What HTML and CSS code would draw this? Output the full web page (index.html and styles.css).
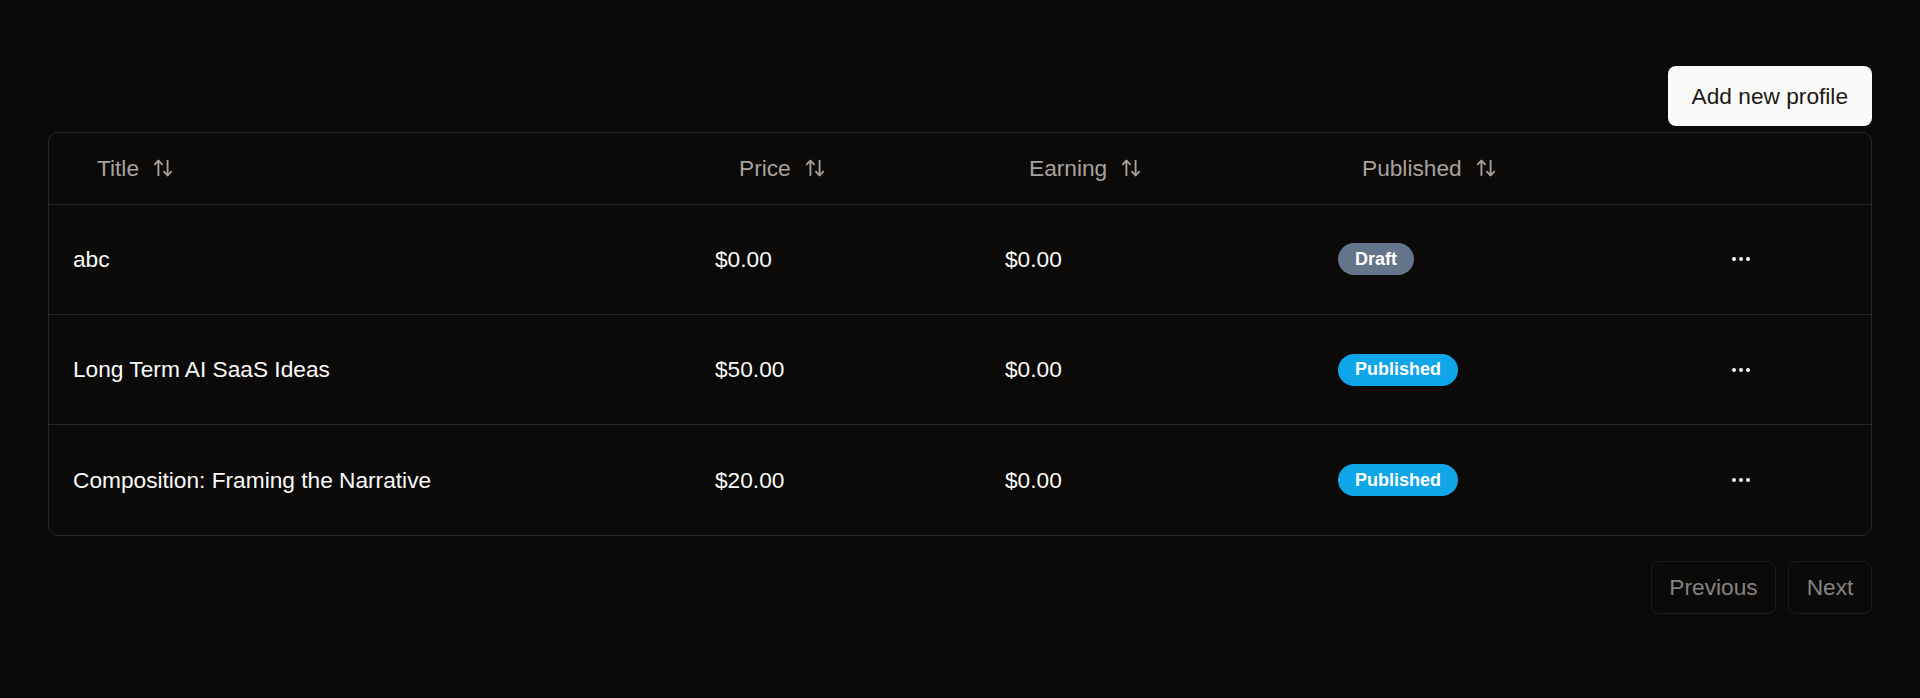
FILE: index.html
```html
<!DOCTYPE html>
<html lang="en">
<head>
<meta charset="utf-8">
<title>Profiles</title>
<link rel="stylesheet" href="styles.css">
</head>
<body>
<main class="page">
  <div class="toolbar">
    <button class="btn-primary">Add new profile</button>
  </div>
  <div class="table-wrap">
    <table class="data-table">
      <colgroup>
        <col class="c-title"><col class="c-price"><col class="c-earning"><col class="c-published"><col class="c-actions">
      </colgroup>
      <thead>
        <tr>
          <th><span class="sort">Title<svg class="sort-icon" viewBox="0 0 24 24"><path d="m21 16-4 4-4-4"/><path d="M17 20V4"/><path d="m3 8 4-4 4 4"/><path d="M7 4v16"/></svg></span></th>
          <th><span class="sort">Price<svg class="sort-icon" viewBox="0 0 24 24"><path d="m21 16-4 4-4-4"/><path d="M17 20V4"/><path d="m3 8 4-4 4 4"/><path d="M7 4v16"/></svg></span></th>
          <th><span class="sort">Earning<svg class="sort-icon" viewBox="0 0 24 24"><path d="m21 16-4 4-4-4"/><path d="M17 20V4"/><path d="m3 8 4-4 4 4"/><path d="M7 4v16"/></svg></span></th>
          <th><span class="sort">Published<svg class="sort-icon" viewBox="0 0 24 24"><path d="m21 16-4 4-4-4"/><path d="M17 20V4"/><path d="m3 8 4-4 4 4"/><path d="M7 4v16"/></svg></span></th>
          <th></th>
        </tr>
      </thead>
      <tbody>
        <tr>
          <td>abc</td>
          <td>$0.00</td>
          <td>$0.00</td>
          <td><span class="badge badge-draft">Draft</span></td>
          <td><span class="more"><svg class="more-icon" viewBox="0 0 24 24"><circle cx="12" cy="12" r="1"/><circle cx="19" cy="12" r="1"/><circle cx="5" cy="12" r="1"/></svg></span></td>
        </tr>
        <tr>
          <td>Long Term AI SaaS Ideas</td>
          <td>$50.00</td>
          <td>$0.00</td>
          <td><span class="badge badge-pub">Published</span></td>
          <td><span class="more"><svg class="more-icon" viewBox="0 0 24 24"><circle cx="12" cy="12" r="1"/><circle cx="19" cy="12" r="1"/><circle cx="5" cy="12" r="1"/></svg></span></td>
        </tr>
        <tr>
          <td>Composition: Framing the Narrative</td>
          <td>$20.00</td>
          <td>$0.00</td>
          <td><span class="badge badge-pub">Published</span></td>
          <td><span class="more"><svg class="more-icon" viewBox="0 0 24 24"><circle cx="12" cy="12" r="1"/><circle cx="19" cy="12" r="1"/><circle cx="5" cy="12" r="1"/></svg></span></td>
        </tr>
      </tbody>
    </table>
  </div>
  <div class="pagination">
    <button class="btn-outline btn-prev" disabled>Previous</button>
    <button class="btn-outline btn-next" disabled>Next</button>
  </div>
</main>
</body>
</html>
```
FILE: styles.css
```css
* { box-sizing: border-box; }
html, body {
  margin: 0;
  background: #0c0a09;
  color: #fafaf9;
  font-family: "Liberation Sans", Arial, sans-serif;
  font-size: 22.7px;
}
.page {
  padding: 66px 48px 40px 48px;
}
.toolbar {
  display: flex;
  justify-content: flex-end;
  margin-bottom: 6px;
}
.btn-primary {
  height: 60px;
  padding: 0 24px;
  border: none;
  border-radius: 8px;
  background: #fafaf9;
  color: #1c1917;
  font-family: inherit;
  font-size: 22.7px;
  cursor: pointer;
}
.table-wrap {
  border: 1px solid #292524;
  border-radius: 10px;
  overflow: hidden;
}
.data-table {
  width: 100%;
  border-collapse: collapse;
  table-layout: fixed;
}
.c-title { width: 642px; }
.c-price { width: 290px; }
.c-earning { width: 333px; }
.c-published { width: 383px; }
.c-actions { width: 174px; }
.data-table th {
  height: 71px;
  padding: 0 24px;
  text-align: left;
  font-weight: 400;
  color: #a8a29e;
  border-bottom: 1px solid #292524;
}
.sort {
  display: inline-flex;
  align-items: center;
  padding-left: 24px;
}
.sort-icon {
  width: 22px;
  height: 22px;
  margin-left: 13px;
  fill: none;
  stroke: currentColor;
  stroke-width: 2;
  stroke-linecap: round;
  stroke-linejoin: round;
}
.data-table td {
  height: 110.4px;
  padding: 0 24px;
  vertical-align: middle;
  border-bottom: 1px solid #292524;
  white-space: nowrap;
}
.data-table tbody tr:last-child td {
  border-bottom: none;
}
.badge {
  display: inline-flex;
  align-items: center;
  height: 32px;
  padding: 0 17px;
  border-radius: 999px;
  font-size: 18px;
  font-weight: 700;
  color: #ffffff;
}
.badge-draft { background: #64748b; }
.badge-pub { background: #0ea5e9; }
.more {
  display: inline-flex;
  align-items: center;
  justify-content: center;
  width: 40px;
  height: 40px;
}
.more-icon {
  width: 24px;
  height: 24px;
  fill: none;
  stroke: #fafaf9;
  stroke-width: 2;
}
.pagination {
  display: flex;
  justify-content: flex-end;
  gap: 12px;
  margin-top: 25px;
}
.btn-outline {
  height: 53px;
  border: 1px solid #1f1d1b;
  border-radius: 8px;
  background: #0c0a09;
  color: #858381;
  font-family: inherit;
  font-size: 22.7px;
}
.btn-prev { width: 125px; }
.btn-next { width: 84px; }
```
